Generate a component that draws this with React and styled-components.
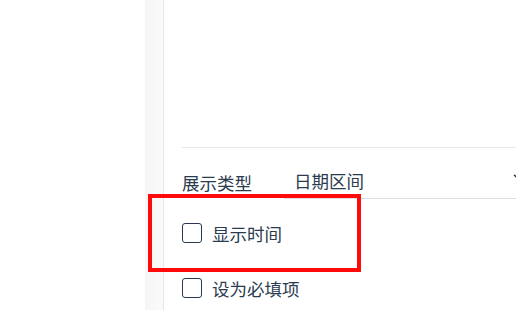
import React from 'react'
import styled, { createGlobalStyle } from 'styled-components'
import { ChevronDown } from 'lucide-react'

const GlobalStyle = createGlobalStyle`
  html, body {
    margin: 0;
    padding: 0;
    background: #fff;
    font-family: "Noto Sans CJK SC", "Noto Sans", sans-serif;
  }
`

const Page = styled.div`
  position: relative;
  display: flex;
  width: 516px;
  height: 310px;
  overflow: hidden;
  background: #fff;
`

const Blank = styled.div`
  width: 145px;
  flex: none;
`

const Shade = styled.div`
  width: 18px;
  flex: none;
  background: linear-gradient(to right, #f6f6f6, #fafafa);
  border-right: 1px solid #e6e6e6;
`

const Panel = styled.div`
  flex: 1;
  min-width: 0;
  padding-left: 18px;
  display: flex;
  flex-direction: column;
`

const Empty = styled.div`
  height: 147px;
  border-bottom: 1px solid #e7e9ee;
`

const FormRow = styled.div`
  display: flex;
  align-items: center;
  height: 36px;
  margin-top: 15px;
`

const Label = styled.span`
  width: 102px;
  flex: none;
  padding-top: 3px;
  font-size: 17.5px;
  color: #2b3b50;
`

const Select = styled.div`
  position: relative;
  flex: 1;
  height: 35px;
  display: flex;
  align-items: center;
  padding-left: 10px;
  font-size: 17.5px;
  color: #2b3b50;
  border-bottom: 1px solid #dcdfe6;

  svg {
    position: absolute;
    right: -9px;
    top: 7px;
    color: #1f2d3d;
  }
`

const CheckRow = styled.label`
  display: flex;
  align-items: center;
  gap: 10px;
  height: 20px;
  margin-top: ${p => p.$top}px;
  font-size: 17.5px;
  color: #2b3b50;
`

const Box = styled.span`
  width: 18px;
  height: 18px;
  flex: none;
  border: 1.5px solid #2b3a4f;
  border-radius: 3px;
  box-sizing: content-box;
`

const Highlight = styled.div`
  position: absolute;
  left: 148px;
  top: 194px;
  width: 205px;
  height: 70px;
  border: 4px solid #ff0a0a;
  pointer-events: none;
`

export default function App() {
  return (
    <>
      <GlobalStyle />
      <Page>
        <Blank />
        <Shade />
        <Panel>
          <Empty />
          <FormRow>
            <Label>展示类型</Label>
            <Select>
              日期区间
              <ChevronDown size={14} strokeWidth={2.5} />
            </Select>
          </FormRow>
          <CheckRow $top={24}>
            <Box />
            显示时间
          </CheckRow>
          <CheckRow $top={35}>
            <Box />
            设为必填项
          </CheckRow>
        </Panel>
        <Highlight />
      </Page>
    </>
  )
}
